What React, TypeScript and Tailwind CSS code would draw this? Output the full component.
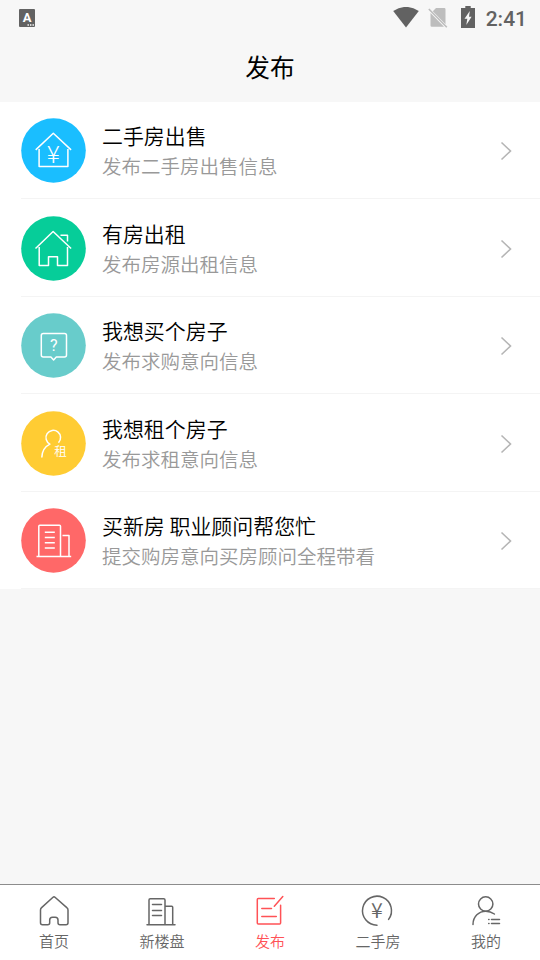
import type { ReactNode } from 'react';

const entries = [
  { title: '二手房出售', desc: '发布二手房出售信息', color: '#1abeff', icon: <SellIcon /> },
  { title: '有房出租', desc: '发布房源出租信息', color: '#06cd99', icon: <RentOutIcon /> },
  { title: '我想买个房子', desc: '发布求购意向信息', color: '#68cccb', icon: <AskIcon /> },
  { title: '我想租个房子', desc: '发布求租意向信息', color: '#ffcc33', icon: <TenantIcon /> },
  { title: '买新房 职业顾问帮您忙', desc: '提交购房意向买房顾问全程带看', color: '#ff6868', icon: <BuildingIcon /> },
];

const tabs = [
  { label: '首页', icon: <HomeTab /> },
  { label: '新楼盘', icon: <EstateTab /> },
  { label: '发布', icon: <PublishTab />, active: true },
  { label: '二手房', icon: <YenTab /> },
  { label: '我的', icon: <MeTab /> },
];

function SellIcon() {
  return (
    <>
      <path d="M-17.8 -.6L-.2 -17.2L17.6 -.6M-14.4 -1.5V16H14.4V-1.5" />
      <text x="-.2" y="12" textAnchor="middle" fontSize="24.5" className="fill-white stroke-none font-light">¥</text>
    </>
  );
}

function RentOutIcon() {
  return <path d="M-18 0L-.4 -17L17.6 0M-14.3 -1.5V17H-5V8.3H4V17H14V-1.5M7 -13.3H14V-7" />;
}

function AskIcon() {
  return (
    <>
      <path d="M-10.2 -12H11a2 2 0 0 1 2 2V9.5a2 2 0 0 1-2 2H2.8L.1 14.4L-2.6 11.5H-10.2a2 2 0 0 1-2-2V-10a2 2 0 0 1 2-2Z" />
      <text x=".2" y="5.8" textAnchor="middle" fontSize="16" className="fill-white stroke-none font-['Roboto',sans-serif] font-normal">?</text>
    </>
  );
}

function TenantIcon() {
  return (
    <>
      <path d="M5 -.8A7.3 7.3 0 1 0 -3.6 .6C-8.5 3 -11.5 7.5 -11.7 14" />
      <text x=".8" y="12" fontSize="12.5" className="fill-white stroke-none">租</text>
    </>
  );
}

function BuildingIcon() {
  return (
    <path d="M-17 16H17.7M-14.7 16V-14.3a1 1 0 0 1 1-1H6a1 1 0 0 1 1 1V16M9 -5H15.5V16M-8.7 -8.3H1.3M-8.7 -3H1.3M-8.7 2.2H1.3M-8.7 7.4H1.3" />
  );
}

function TabSvg({ children }: { children: ReactNode }) {
  return (
    <svg width="32" height="32" viewBox="0 0 32 32" fill="none" stroke="currentColor" strokeWidth="1.5" strokeLinecap="round" strokeLinejoin="round" className="overflow-visible">
      {children}
    </svg>
  );
}

function HomeTab() {
  return (
    <TabSvg>
      <path d="M15 2.3Q16 1.4 17 2.3L28.8 12.6Q30 13.6 30 15V27.7a2 2 0 0 1-2 2H22a2 2 0 0 1-2-2V25q0-2.8-2.8-2.8H14.5q-2.8 0-2.8 2.8V27.7a2 2 0 0 1-2 2H4.5a2 2 0 0 1-2-2V15Q2.5 13.6 3.6 12.6Z" />
    </TabSvg>
  );
}

function EstateTab() {
  return (
    <TabSvg>
      <path d="M1 29.7H29M3 29.7V5a1.3 1.3 0 0 1 1.3-1.3H17.7A1.3 1.3 0 0 1 19 5V29.7M19 11.3H25.7a1 1 0 0 1 1 1V29.7M6.5 9.5H15.5M6.5 15.5H15.5M6.5 20.5H15.5" />
    </TabSvg>
  );
}

function PublishTab() {
  return (
    <TabSvg>
      <path d="M20.3 3.6H4.3a1 1 0 0 0-1 1V28a1 1 0 0 0 1 1H25.6a1 1 0 0 0 1-1V10.3M20.3 11.2L28.8 1.5M7.8 13.4H17.5M7.8 21.4H22.3" />
    </TabSvg>
  );
}

function YenTab() {
  return (
    <TabSvg>
      <path d="M15 30.2A14.5 14.5 0 1 1 26.6 24.4" />
      <text x="15" y="22.8" textAnchor="middle" fontSize="21.5" stroke="none" fill="currentColor">¥</text>
    </TabSvg>
  );
}

function MeTab() {
  return (
    <TabSvg>
      <circle cx="15.7" cy="9" r="7.2" />
      <path d="M3 29.4C3 21.5 9 16.2 15.7 16.2Q20.5 16.2 24.4 19M21.5 24.5H29.5M21.5 28.5H29.5M18.7 24.5H19M18.7 28.5H19" />
    </TabSvg>
  );
}

function StatusBar() {
  return (
    <div className="flex h-9 items-center justify-between pl-[19px] pr-[13px] text-[#626262]">
      <svg width="16" height="18" viewBox="0 0 16 18">
        <rect width="16" height="18" rx="1" fill="currentColor" />
        <text x="8" y="13.2" textAnchor="middle" fontSize="13" className="fill-white font-['Roboto',sans-serif] font-bold">A</text>
        <path d="M8.5 16h1.4M11 16h1.4M13.5 16h1.4" stroke="#fff" strokeWidth="1.5" />
      </svg>
      <div className="flex items-center">
        <svg width="26" height="22" viewBox="0 0 26 22" fill="currentColor">
          <path d="M.2 4.1Q13 -4.3 25.8 4.1L13 20.6Z" />
        </svg>
        <svg width="20" height="22" viewBox="0 0 20 22" className="ml-[9px]">
          <path d="M8 1H16.3a1.2 1.2 0 0 1 1.2 1.2V17.3L4.8 4.2ZM2.5 6L16 19.7H3.7a1.2 1.2 0 0 1-1.2-1.2Z" fill="#bdbdbd" />
          <path d="M.8 2L18.8 20.3" stroke="#bdbdbd" strokeWidth="1.6" />
        </svg>
        <svg width="14" height="22" viewBox="0 0 14 22" className="mb-[2px] ml-[13px]">
          <path d="M4.3 0H9.7V2H14V22H0V2H4.3Z" fill="currentColor" />
          <path d="M8.8 5L3.5 12.8H6.3L5.3 19L10.6 10.8H8Z" fill="#f7f7f7" />
        </svg>
        <span className="mt-[2px] ml-[11px] font-['Roboto',sans-serif] text-[21px] leading-6 font-medium">2:41</span>
      </div>
    </div>
  );
}

export default function App() {
  return (
    <div className="flex h-[960px] w-[540px] flex-col overflow-hidden bg-[#f7f7f7] font-['Noto_Sans_CJK_SC',sans-serif] font-[350]">
      <StatusBar />
      <h1 className="h-[65.5px] text-center text-[24.7px] leading-[60px] font-normal text-black">发布</h1>

      <main className="flex-1">
        <ul className="bg-white">
          {entries.map((item) => (
            <li key={item.title} className="flex h-[97.5px] pl-[21px]">
              <div className="flex flex-1 items-center border-b border-[#f4f4f4] pr-[28px]">
                <svg width="65" height="65" viewBox="-32.5 -32.5 65 65" fill="none" stroke="#fff" strokeWidth="1.5" strokeLinejoin="round" className="mt-[2px]">
                  <circle r="32.3" fill={item.color} stroke="none" />
                  {item.icon}
                </svg>
                <div className="ml-[16px] flex-1 pt-[2.5px]">
                  <p className="text-[20.95px] leading-[29px] text-black">{item.title}</p>
                  <p className="text-[19.5px] leading-[31px] text-[#999]">{item.desc}</p>
                </div>
                <svg width="12" height="20" viewBox="0 0 12 20" fill="none" stroke="#b5b5b5" strokeWidth="1.6" className="mt-[3px]">
                  <path d="M1.5 1.5L10.5 10L1.5 18.5" />
                </svg>
              </div>
            </li>
          ))}
        </ul>
      </main>

      <nav className="flex h-[76px] border-t border-[#8c8c8c] bg-white">
        {tabs.map((tab) => (
          <div key={tab.label} className={`flex flex-1 flex-col items-center pt-[10px] ${tab.active ? 'text-[#ff5256]' : 'text-[#666]'}`}>
            {tab.icon}
            <span className="mt-[3px] text-[15px] leading-[22px]">{tab.label}</span>
          </div>
        ))}
      </nav>
    </div>
  );
}
